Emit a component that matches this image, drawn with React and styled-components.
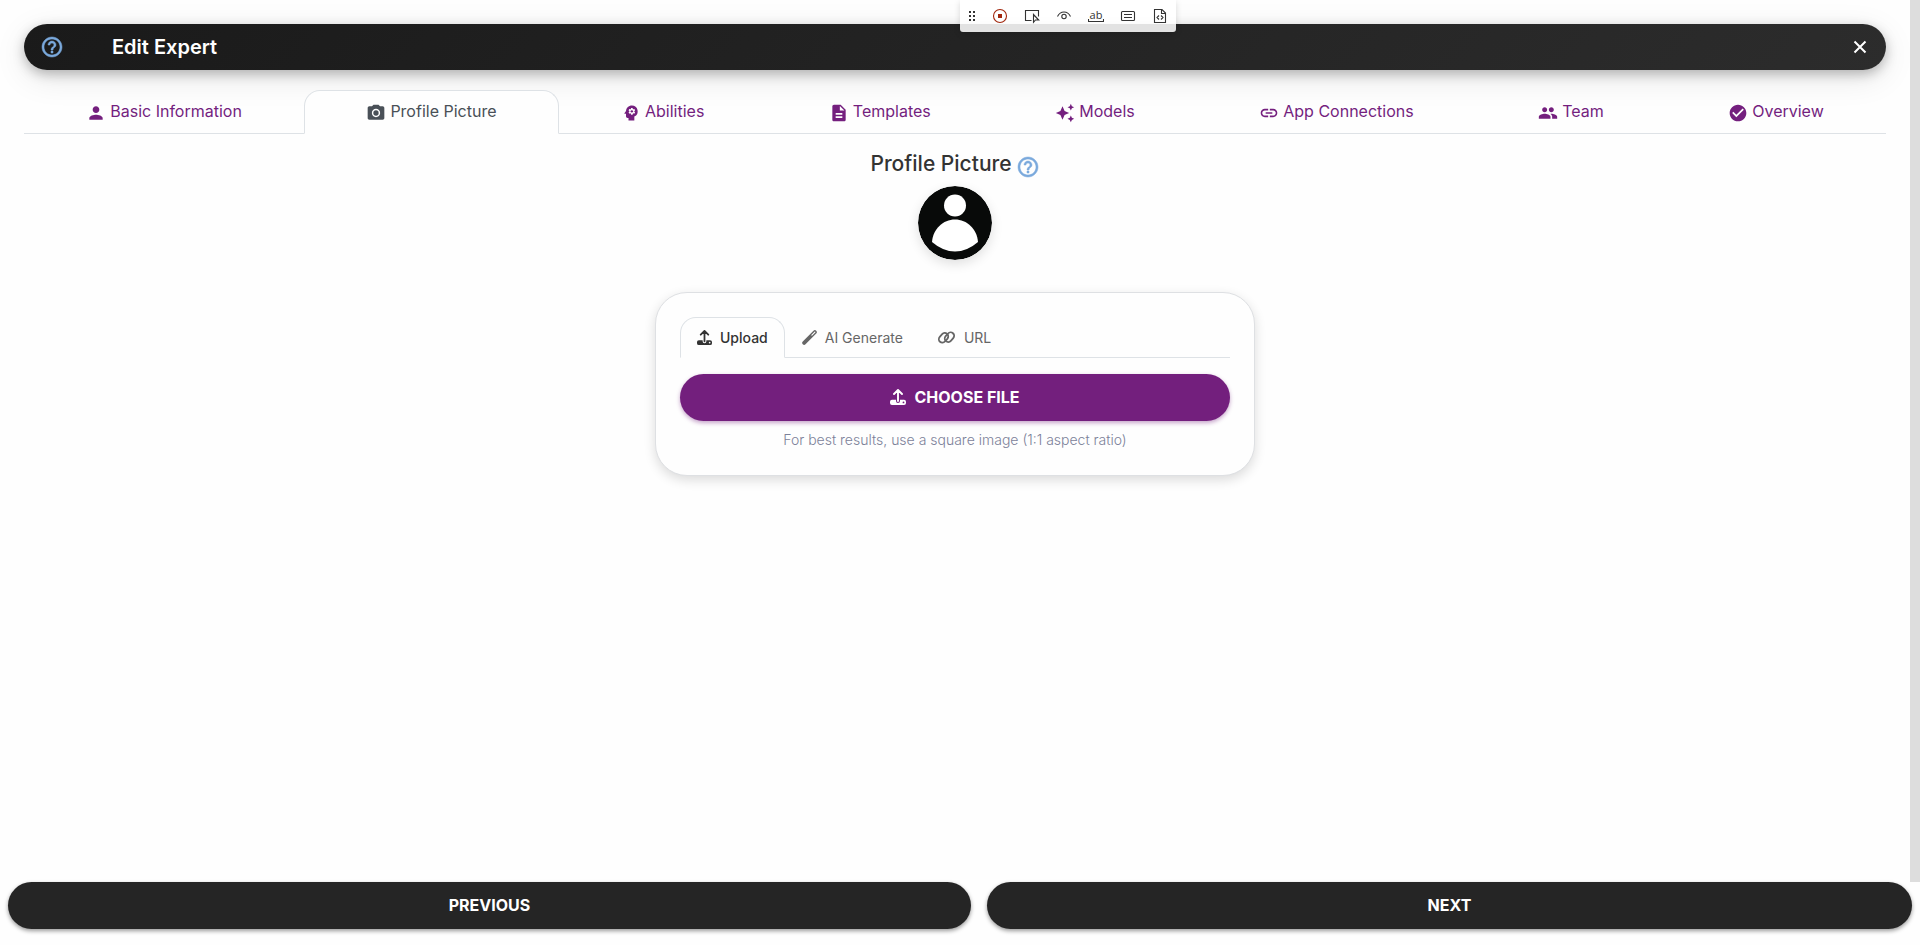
import React from "react";
import styled, { createGlobalStyle } from "styled-components";
import {
  MdPerson,
  MdPhotoCamera,
  MdPsychology,
  MdDescription,
  MdAutoAwesome,
  MdLink,
  MdGroup,
  MdCheckCircle,
  MdHelpOutline
} from "react-icons/md";

const GlobalStyle = createGlobalStyle`
  * {
    box-sizing: border-box;
  }

  body {
    margin: 0;
    background: #fefefe;
    color: #333;
    font-family: Inter, "Liberation Sans", sans-serif;
    font-size: 16px;
    line-height: 24px;
  }

  button {
    font-family: inherit;
  }
`;

const Page = styled.div`
  display: flex;
  flex-direction: column;
  min-height: 100vh;
`;

const Body = styled.div`
  display: flex;
  flex: 1;
`;

const ScrollTrack = styled.div`
  width: 10px;
  background: #ddd;
`;

const Main = styled.main`
  flex: 1;
  min-width: 0;
  padding: 24px;
`;

const HeaderBar = styled.header`
  display: flex;
  align-items: center;
  height: 46px;
  padding: 0 16px;
  border-radius: 24px;
  background: linear-gradient(135deg, #1a1a1a 0%, #2c2c2c 100%);
  box-shadow: 0 4px 12px rgba(0, 0, 0, 0.25), 0 8px 32px rgba(0, 0, 0, 0.1);
  color: #fff;

  h1 {
    flex: 1;
    margin: 0 0 0 48px;
    font-size: 20px;
    font-weight: 600;
  }
`;

const IconButton = styled.button`
  display: flex;
  padding: 0;
  border: 0;
  background: none;
  color: ${props => props.$color};
  cursor: pointer;
`;

const HelpIcon = styled(MdHelpOutline)`
  width: 24px;
  height: 24px;

  path:last-child {
    stroke: currentColor;
    stroke-width: 0.5;
  }
`;

const Tabs = styled.nav`
  display: flex;
  margin-top: 20px;
  border-bottom: 1px solid #dee2e6;
`;

const Tab = styled.a`
  flex: 1 1 auto;
  display: flex;
  align-items: center;
  justify-content: center;
  gap: 4px;
  height: 44px;
  margin-bottom: -1px;
  padding: 0 16px 2px;
  border: 1px solid ${props => (props.$active ? "#dee2e6" : "transparent")};
  border-bottom-color: ${props => (props.$active ? "#fefefe" : "#dee2e6")};
  border-radius: ${props => (props.$active ? "16px 16px 0 0" : "0")};
  background: ${props => (props.$active ? "#fefefe" : "transparent")};
  color: ${props => (props.$active ? "#495057" : "#741f7e")};
  text-decoration: none;

  svg {
    width: 20px;
    height: 20px;
    margin-top: 4px;
  }
`;

const Section = styled.section`
  display: flex;
  flex-direction: column;
  align-items: center;
  padding-top: 12px;
`;

const SectionTitle = styled.div`
  display: flex;
  gap: 4px;
  height: 40px;

  h2 {
    margin: 0;
    font-size: 21px;
    font-weight: 500;
    line-height: 36px;
    color: #333;
  }

  button {
    align-self: flex-end;
    padding-bottom: 7px;
  }
`;

const Avatar = styled.svg`
  width: 74px;
  height: 74px;
  border-radius: 50%;
  box-shadow: 0 4px 12px rgba(0, 0, 0, 0.12);
`;

const Card = styled.div`
  width: 100%;
  max-width: 600px;
  margin-top: 32px;
  padding: 24px;
  border: 1px solid #dee0e3;
  border-radius: 32px;
  background: #fefefe;
  box-shadow: 0 4px 12px rgba(0, 0, 0, 0.14);
`;

const CardTabs = styled.div`
  display: flex;
  border-bottom: 1px solid #dee2e6;
`;

const CardTab = styled.button`
  display: flex;
  align-items: center;
  gap: 8px;
  height: 41px;
  margin-bottom: -1px;
  padding: 0 16px;
  border: 1px solid ${props => (props.$active ? "#dee2e6" : "transparent")};
  border-bottom-color: ${props => (props.$active ? "#fefefe" : "#dee2e6")};
  border-radius: ${props => (props.$active ? "16px 16px 0 0" : "0")};
  background: none;
  color: ${props => (props.$active ? "#333" : "#666")};
  font-size: 14px;
  font-weight: ${props => (props.$active ? 500 : 400)};
  cursor: pointer;
`;

const PillButton = styled.button`
  display: flex;
  flex: 1 1 auto;
  align-items: center;
  justify-content: center;
  gap: 8px;
  min-height: 47px;
  padding: 0 24px 2px;
  border: 0;
  border-radius: 24px;
  background: ${props => (props.$primary ? "#731f7d" : "#252525")};
  box-shadow: 0 2px 4px
    ${props => (props.$primary ? "rgba(115, 31, 125, 0.4)" : "rgba(0, 0, 0, 0.4)")};
  color: #fff;
  font-size: 16px;
  font-weight: 700;
  text-transform: uppercase;
  cursor: pointer;
`;

const UploadPanel = styled.div`
  display: flex;
  flex-direction: column;
  padding-top: 16px;

  p {
    margin: 8px 0 0;
    color: #7c8199;
    font-size: 14px;
    font-weight: 300;
    line-height: 22px;
    text-align: center;
  }
`;

const Footer = styled.footer`
  display: flex;
  gap: 16px;
  padding: 0 8px 16px;
`;

const DevToolbar = styled.div`
  position: absolute;
  top: 0;
  left: 50%;
  display: flex;
  height: 32px;
  border-radius: 0 0 3px 3px;
  background: rgba(255, 255, 255, 0.87);
  box-shadow: 0 2px 6px rgba(0, 0, 0, 0.15);
`;

const ToolButton = styled.button`
  display: flex;
  align-items: center;
  justify-content: center;
  width: ${props => (props.$narrow ? "24px" : "32px")};
  padding: 0;
  border: 0;
  background: none;
  color: ${props => (props.$record ? "#a1260d" : "#333")};

  svg {
    width: 16px;
    height: 16px;
    fill: none;
    stroke: currentColor;
    stroke-width: 1.1;
  }

  .solid {
    fill: currentColor;
    stroke: none;
  }

  text {
    font-family: "Open Sans", sans-serif;
    font-size: 11px;
  }
`;

const UploadIcon = ({ size }) => (
  <svg width={size} height={size} viewBox="0 0 16 16" fill="none">
    <path
      d="M8 12V1.500M4 5l4-4 4 4"
      stroke="currentColor"
      strokeWidth="1.900"
      strokeLinecap="round"
      strokeLinejoin="round"
    />
    <path
      fillRule="evenodd"
      d="M2 10.800h4V12a2 2 0 0 0 4 0v-1.200h4a2 2 0 0 1 2 2V14a2 2 0 0 1-2 2H2a2 2 0 0 1-2-2v-1.200a2 2 0 0 1 2-2zM13.500 12.500a.9.9 0 1 0 0 1.800.9.9 0 0 0 0-1.800z"
      fill="currentColor"
    />
  </svg>
);

const WandIcon = () => (
  <svg width="15" height="15" viewBox="0 0 14 14" fill="none" strokeLinecap="round">
    <path d="M2 12L12 2" stroke="currentColor" strokeWidth="3.600" />
    <path d="M9.200 4.800L12 2" stroke="#fefefe" strokeWidth="1" />
  </svg>
);

const ChainIcon = () => (
  <svg width="19" height="15" viewBox="0 0 18 14" fill="none" stroke="currentColor" strokeWidth="1.700">
    <rect x="1.200" y="4" width="10" height="6.600" rx="3.300" transform="rotate(-48 6.200 7.300)" />
    <rect x="6.800" y="3.400" width="10" height="6.600" rx="3.300" transform="rotate(-48 11.800 6.700)" />
  </svg>
);

const tabs = [
  { label: "Basic Information", icon: MdPerson },
  { label: "Profile Picture", icon: MdPhotoCamera, active: true },
  { label: "Abilities", icon: MdPsychology },
  { label: "Templates", icon: MdDescription },
  { label: "Models", icon: MdAutoAwesome },
  { label: "App Connections", icon: MdLink },
  { label: "Team", icon: MdGroup },
  { label: "Overview", icon: MdCheckCircle }
];

const Toolbar = () => (
  <DevToolbar>
    <ToolButton $narrow aria-label="Move toolbar">
      <svg viewBox="0 0 16 16">
        <path
          className="solid"
          d="M5 3h2v2H5zM9 3h2v2H9zM5 7h2v2H5zM9 7h2v2H9zM5 11h2v2H5zM9 11h2v2H9z"
        />
      </svg>
    </ToolButton>
    <ToolButton $record aria-label="Record">
      <svg viewBox="0 0 16 16">
        <circle cx="8" cy="8" r="6.500" />
        <path className="solid" d="M6 6h4v4H6z" />
      </svg>
    </ToolButton>
    <ToolButton aria-label="Pick locator">
      <svg viewBox="0 0 16 16">
        <path d="M7.500 12.500h-6v-10h13v6M9.500 6.500v7.800l2-2.300h3.200z" />
      </svg>
    </ToolButton>
    <ToolButton aria-label="Assert visibility">
      <svg viewBox="0 0 16 16">
        <path d="M1.500 8.500C3 5.500 5.300 4 8 4s5 1.500 6.500 4.500" />
        <circle cx="8" cy="8.500" r="2.200" />
      </svg>
    </ToolButton>
    <ToolButton aria-label="Assert text">
      <svg viewBox="0 0 16 16">
        <text className="solid" x="8" y="11" textAnchor="middle">ab</text>
        <path d="M.5 11v2.500h15V11" />
      </svg>
    </ToolButton>
    <ToolButton aria-label="Assert value">
      <svg viewBox="0 0 16 16">
        <rect x="1.500" y="3.500" width="13" height="9" rx="1" />
        <path d="M4 6.500h8M4 9.500h8" />
      </svg>
    </ToolButton>
    <ToolButton aria-label="Assert snapshot">
      <svg viewBox="0 0 16 16">
        <path d="M2.500 1.500h7.500l3.500 3.500v9.500h-11zM9.500 1.500v4h4M7 7.500l-2 2 2 2M9 7.500l2 2-2 2" />
      </svg>
    </ToolButton>
  </DevToolbar>
);

const App = () => (
  <Page>
    <GlobalStyle />
    <Body>
      <Main>
        <HeaderBar>
          <IconButton $color="#7aa9dc" aria-label="Help">
            <HelpIcon />
          </IconButton>
          <h1>Edit Expert</h1>
          <IconButton $color="#fff" aria-label="Close">
            <svg width="20" height="20" viewBox="0 0 20 20" stroke="currentColor" strokeWidth="2">
              <path d="M4.500 4.500l11 11M15.500 4.500l-11 11" />
            </svg>
          </IconButton>
        </HeaderBar>
        <Tabs>
          {tabs.map(tab => (
            <Tab key={tab.label} href="#" $active={tab.active}>
              <tab.icon />
              {tab.label}
            </Tab>
          ))}
        </Tabs>
        <Section>
          <SectionTitle>
            <h2>Profile Picture</h2>
            <IconButton $color="#7aa9dc" aria-label="Profile picture help">
              <HelpIcon />
            </IconButton>
          </SectionTitle>
          <Avatar viewBox="0 0 74 74">
            <circle cx="37" cy="37" r="37" fill="#080a09" />
            <circle cx="37" cy="19.500" r="11" fill="#fff" />
            <path d="M14 56C15 43 25 33.500 37 33.500S59 43 60 56Q49 65.500 37 65.500T14 56z" fill="#fff" />
          </Avatar>
          <Card>
            <CardTabs>
              <CardTab $active>
                <UploadIcon size={15} />
                Upload
              </CardTab>
              <CardTab>
                <WandIcon />
                AI Generate
              </CardTab>
              <CardTab>
                <ChainIcon />
                URL
              </CardTab>
            </CardTabs>
            <UploadPanel>
              <PillButton $primary>
                <UploadIcon size={16} />
                Choose file
              </PillButton>
              <p>For best results, use a square image (1:1 aspect ratio)</p>
            </UploadPanel>
          </Card>
        </Section>
      </Main>
      <ScrollTrack />
    </Body>
    <Footer>
      <PillButton>Previous</PillButton>
      <PillButton>Next</PillButton>
    </Footer>
    <Toolbar />
  </Page>
);

export default App;
